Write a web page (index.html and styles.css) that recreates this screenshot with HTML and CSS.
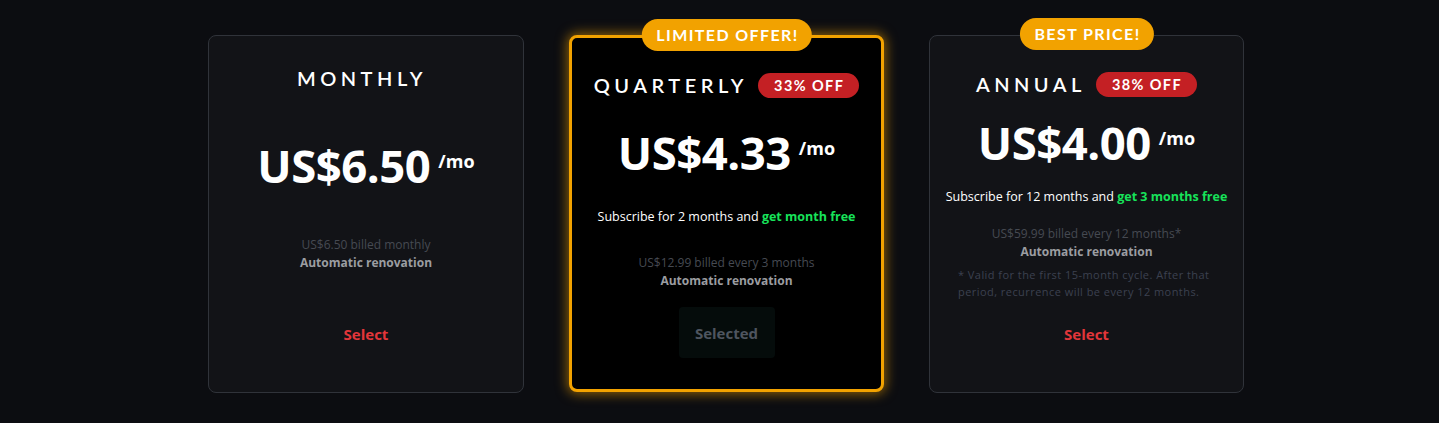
FILE: index.html
```html
<!DOCTYPE html>
<html lang="en">
<head>
<meta charset="utf-8">
<title>Plans</title>
<link rel="stylesheet" href="styles.css">
</head>
<body>
<main class="plans">
  <section class="card card--monthly">
    <div class="title-row"><h2 class="plan-name">MONTHLY</h2></div>
    <div class="price"><span class="amount">US$6.50</span><span class="per">/mo</span></div>
    <div class="billing">
      <p class="billed">US$6.50 billed monthly</p>
      <p class="auto">Automatic renovation</p>
    </div>
    <div class="action"><button class="btn-select">Select</button></div>
  </section>

  <section class="card card--featured">
    <span class="ribbon">LIMITED OFFER!</span>
    <div class="title-row"><h2 class="plan-name">QUARTERLY</h2><span class="off">33% OFF</span></div>
    <div class="price"><span class="amount">US$4.33</span><span class="per">/mo</span></div>
    <p class="promo">Subscribe for 2 months and <strong>get month free</strong></p>
    <div class="billing">
      <p class="billed">US$12.99 billed every 3 months</p>
      <p class="auto">Automatic renovation</p>
    </div>
    <div class="action"><button class="btn-selected">Selected</button></div>
  </section>

  <section class="card card--annual">
    <span class="ribbon">BEST PRICE!</span>
    <div class="title-row"><h2 class="plan-name">ANNUAL</h2><span class="off">38% OFF</span></div>
    <div class="price"><span class="amount">US$4.00</span><span class="per">/mo</span></div>
    <p class="promo">Subscribe for 12 months and <strong>get 3 months free</strong></p>
    <div class="billing">
      <p class="billed">US$59.99 billed every 12 months*</p>
      <p class="auto">Automatic renovation</p>
    </div>
    <p class="note">* Valid for the first 15-month cycle. After that period, recurrence will be every 12 months.</p>
    <div class="action"><button class="btn-select">Select</button></div>
  </section>
</main>
</body>
</html>
```

FILE: styles.css
```css
* { box-sizing: border-box; }
html, body { margin: 0; padding: 0; }
body {
  background: #0c0d11;
  font-family: "Open Sans", "Noto Sans", sans-serif;
  color: #fff;
  height: 423px;
  overflow: hidden;
}
p { margin: 0; }
h2 { margin: 0; }

.plans {
  display: flex;
  justify-content: center;
  align-items: flex-start;
  gap: 45px;
  padding: 35px 0 0 13px;
}

.card {
  position: relative;
  width: 316px;
  height: 358px;
  background: #121317;
  border: 1px solid #30333a;
  border-radius: 8px;
  display: flex;
  flex-direction: column;
  align-items: center;
  text-align: center;
  padding: 29px 12px 33px;
}
.card--featured {
  width: 315px;
  height: 357px;
  background: #000;
  border: 3px solid #f2a200;
  box-shadow: 0 0 12px 2px rgba(242, 162, 0, 0.55);
  padding-top: 34px;
  padding-bottom: 31px;
}
.card--annual { width: 315px; padding-top: 35px; }

.ribbon {
  position: absolute;
  top: -18px;
  left: 50%;
  transform: translateX(-50%);
  background: #f2a200;
  color: #fff;
  font-family: "Lato", sans-serif;
  font-weight: 700;
  font-size: 16px;
  letter-spacing: 1.4px;
  line-height: 32px;
  height: 32px;
  padding: 0 13px 0 15px;
  border-radius: 16px;
  white-space: nowrap;
}
.card--featured .ribbon { top: -19px; }

.title-row {
  display: flex;
  align-items: center;
  justify-content: center;
  gap: 10px;
  height: 26px;
}
.card--monthly .title-row { padding-right: 8px; }
.plan-name {
  font-family: "Lato", sans-serif;
  font-weight: 600;
  font-size: 20px;
  letter-spacing: 4.5px;
  color: #fff;
}
.off {
  background: #c42024;
  color: #fff;
  font-family: "Lato", sans-serif;
  font-weight: 700;
  font-size: 14.5px;
  letter-spacing: 1.4px;
  height: 25px;
  line-height: 25px;
  padding: 0 15px 0 16px;
  border-radius: 13px;
}

.price {
  display: flex;
  align-items: flex-start;
  gap: 8px;
  margin-top: 50px;
}
.card--featured .price { margin-top: 30px; }
.card--annual .price { margin-top: 21px; }
.amount {
  font-size: 45.5px;
  font-weight: 700;
  line-height: 48px;
  letter-spacing: -0.5px;
}
.per {
  font-size: 18px;
  font-weight: 700;
  line-height: 18px;
  margin-top: 11px;
}

.promo {
  font-size: 12.5px;
  line-height: 18px;
  color: #fff;
  margin-top: 32px;
  white-space: nowrap;
}
.card--annual .promo { margin-top: 22px; }
.promo strong { color: #17e35a; font-weight: 700; }

.billing {
  margin-top: 28px;
  font-size: 12px;
  line-height: 18px;
}
.card--monthly .billing { margin-top: 47px; }
.card--annual .billing { margin-top: 19px; }
.billed { color: #464a52; }
.auto { color: #9b9da1; font-weight: 700; }

.note {
  margin-top: 5px;
  padding: 0 16px;
  text-align: left;
  font-size: 11px;
  line-height: 17px;
  letter-spacing: 0.45px;
  color: #3c4150;
}

.action {
  margin-top: auto;
  height: 51px;
  display: flex;
  align-items: center;
  justify-content: center;
}
.btn-select, .btn-selected {
  font-family: inherit;
  font-size: 15px;
  font-weight: 700;
  border: 0;
  cursor: pointer;
}
.btn-select {
  background: transparent;
  color: #e2363a;
  padding: 0 16px;
}
.btn-selected {
  background: #050c0b;
  color: #4e555f;
  height: 51px;
  width: 96px;
  border-radius: 4px;
}
```
